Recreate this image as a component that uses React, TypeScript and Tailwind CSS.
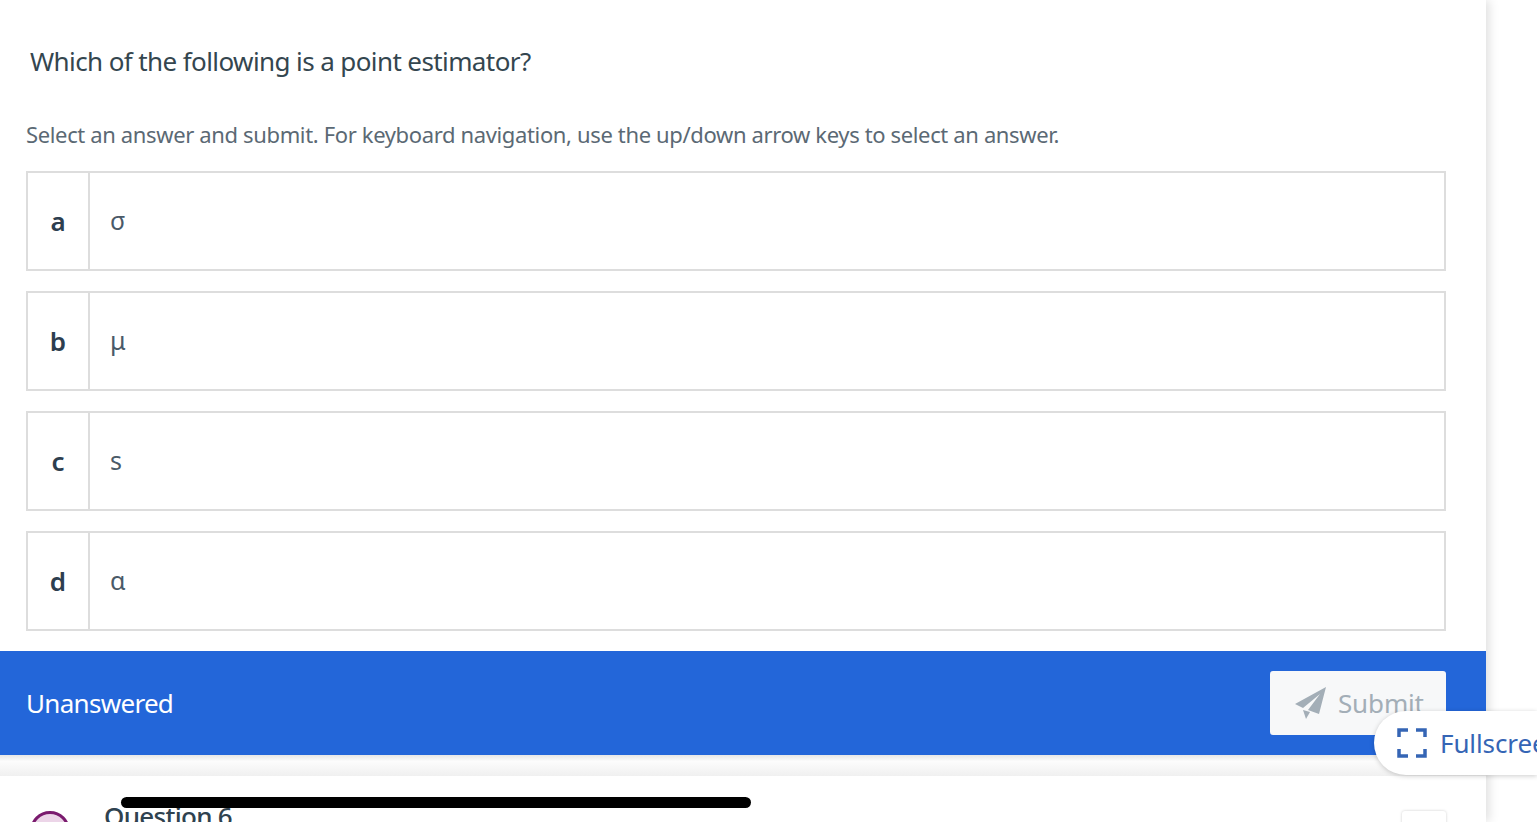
const options = [
  { letter: 'a', text: 'σ' },
  { letter: 'b', text: 'μ' },
  { letter: 'c', text: 's' },
  { letter: 'd', text: 'α' },
]

function OptionRow({ letter, text }: { letter: string; text: string }) {
  return (
    <div className="flex h-[100px] border-2 border-[#dddddd] bg-white">
      <div className="flex w-[62px] items-center justify-center border-r-2 border-[#dddddd] text-[26px] font-semibold text-[#2d3e4f]">
        {letter}
      </div>
      <div className="flex items-center pl-[20px] text-[25px] text-[#4a5a68]">{text}</div>
    </div>
  )
}

export default function App() {
  return (
    <div className="relative h-[822px] w-[1537px] overflow-hidden bg-white font-['Noto_Sans',sans-serif]">
      <div className="h-full w-[1486px] bg-white shadow-[3px_0_10px_rgba(0,0,0,0.13)]">
        <div className="pl-[30px] pt-[42px] text-[26px] leading-[38px] tracking-[-0.6px] text-[#34464f]">
          Which of the following is a point estimator?
        </div>
        <div className="pl-[26px] pt-[34px] text-[22px] leading-[40px] tracking-[-0.36px] text-[#5b6974]">
          Select an answer and submit. For keyboard navigation, use the up/down arrow keys to select an answer.
        </div>
        <div className="mt-[17px] flex w-[1446px] flex-col gap-[20px] pl-[26px]">
          {options.map((o) => (
            <OptionRow key={o.letter} letter={o.letter} text={o.text} />
          ))}
        </div>
        <div className="mt-[20px] flex h-[104px] items-center justify-between bg-[#2366d9] pl-[26px] pr-[40px]">
          <span className="text-[26px] tracking-[-0.7px] text-white">Unanswered</span>
          <button className="flex h-[64px] w-[176px] items-center gap-[12px] rounded-[3px] bg-[#f7f8f9] pl-[24px] text-[26px] tracking-[-0.15px] text-[#a3aeb7]">
            <svg viewBox="0 0 32 32" className="h-[32px] w-[32px] shrink-0" fill="#a3aeb7">
              <path d="M32 0 1 17l8 4L26 7 14 23l11 4z" />
              <path d="M9 23l3 9 4-7z" />
            </svg>
            Submit
          </button>
        </div>
        <div className="h-[21px] bg-gradient-to-b from-[#e6e6e6] via-[#fcfcfc] via-30% to-[#f0f0f0]" />
        <div className="flex items-start gap-[34px] pl-[30px] pt-[24px]">
          <div className="mt-[11px] h-[40px] w-[40px] shrink-0 rounded-full border-[3px] border-[#7a1a6e] bg-[#ecd5e8]" />
          <div className="text-[26px] font-medium leading-[32px] tracking-[-0.7px] text-[#2f424f]">Question 6</div>
        </div>
      </div>
      <div className="absolute left-[121px] top-[797px] h-[11px] w-[630px] rounded-full bg-black" />
      <div className="absolute left-[1374px] top-[711px] flex h-[64px] w-[163px] items-center gap-[13px] overflow-hidden rounded-l-[32px] bg-white pl-[23px] text-[26px] tracking-[-0.1px] whitespace-nowrap text-[#3565b5] shadow-[0_1px_5px_rgba(0,0,0,0.2)]">
        <svg viewBox="0 0 30 30" className="h-[30px] w-[30px] shrink-0" fill="none" stroke="#3565b5" strokeWidth="3.5">
          <path d="M2 9V2h9M19 2h9v7M28 21v7h-9M11 28H2v-7" />
        </svg>
        Fullscreen
      </div>
      <div className="absolute left-[1402px] top-[811px] h-[20px] w-[44px] rounded-[3px] bg-white shadow-[0_0_3px_rgba(0,0,0,0.2)]" />
    </div>
  )
}
